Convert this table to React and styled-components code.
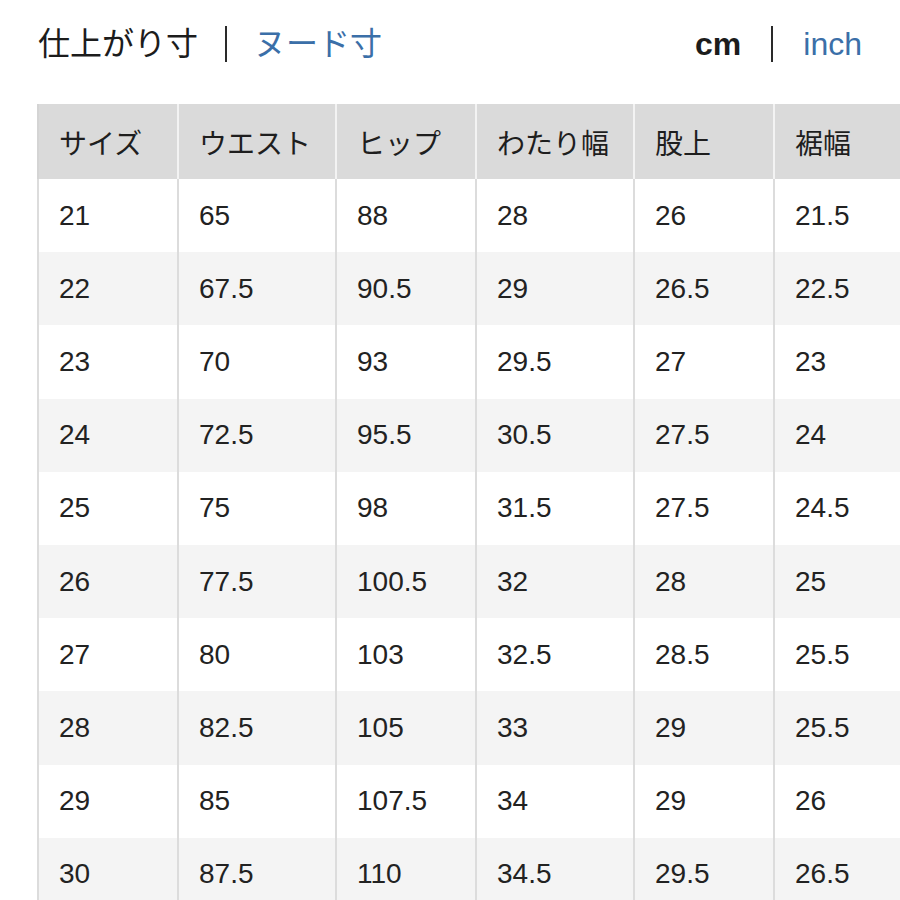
import React from "react";
import styled, { createGlobalStyle } from "styled-components";

const GlobalStyle = createGlobalStyle`
  html, body {
    margin: 0;
    padding: 0;
    background: #ffffff;
    overflow: hidden;
  }
  body {
    font-family: "Liberation Sans", "Noto Sans CJK JP", sans-serif;
    color: #1e1e1e;
  }
`;

const Page = styled.div`
  width: 900px;
  height: 900px;
  overflow: hidden;
  padding-top: 24px;
  box-sizing: border-box;
`;

const TopBar = styled.div`
  display: flex;
  justify-content: space-between;
  align-items: center;
  height: 40px;
  padding: 0 38px;
  margin-bottom: 40px;
`;

const Toggle = styled.div`
  display: flex;
  align-items: center;
  gap: ${(p) => p.gap || 30}px;
  font-size: ${(p) => p.size || 31}px;
`;

const Option = styled.span`
  color: ${(p) => (p.active ? "#1c1c1c" : "#3b6fa8")};
  font-weight: ${(p) => (p.bold ? 700 : 400)};
  font-family: "Liberation Sans", "Noto Sans CJK JP", sans-serif;
  line-height: 1;
`;

const Divider = styled.span`
  display: block;
  width: 2px;
  height: 36px;
  background: #2a2a2a;
`;

const Table = styled.table`
  margin-left: 37px;
  border-collapse: collapse;
  table-layout: fixed;
  width: 876px;
  font-size: 28px;
`;

const Col = styled.col`
  width: ${(p) => p.w}px;
`;

const HeadCell = styled.th`
  height: 75px;
  padding: 0 0 0 20px;
  text-align: left;
  font-weight: 400;
  background: #dadada;
  border-left: 2px solid ${(p) => (p.first ? "#d4d4d4" : "#f3f3f3")};
  color: #1e1e1e;
  white-space: nowrap;
  box-sizing: border-box;
`;

const Row = styled.tr`
  background: ${(p) => (p.shade ? "#f4f4f4" : "#ffffff")};
`;

const Cell = styled.td`
  height: 73.2px;
  padding: 0 0 0 20px;
  border-left: 2px solid #dcdcdc;
  color: #222222;
  white-space: nowrap;
  box-sizing: border-box;
`;

const widths = [140, 158, 140, 158, 140, 140];
const headers = ["サイズ", "ウエスト", "ヒップ", "わたり幅", "股上", "裾幅"];
const rows = [
  ["21", "65", "88", "28", "26", "21.5"],
  ["22", "67.5", "90.5", "29", "26.5", "22.5"],
  ["23", "70", "93", "29.5", "27", "23"],
  ["24", "72.5", "95.5", "30.5", "27.5", "24"],
  ["25", "75", "98", "31.5", "27.5", "24.5"],
  ["26", "77.5", "100.5", "32", "28", "25"],
  ["27", "80", "103", "32.5", "28.5", "25.5"],
  ["28", "82.5", "105", "33", "29", "25.5"],
  ["29", "85", "107.5", "34", "29", "26"],
  ["30", "87.5", "110", "34.5", "29.5", "26.5"],
];

export default function App() {
  return (
    <>
      <GlobalStyle />
      <Page>
        <TopBar>
          <Toggle size={32} gap={27}>
            <Option active>仕上がり寸</Option>
            <Divider />
            <Option>ヌード寸</Option>
          </Toggle>
          <Toggle size={32}>
            <Option active bold>
              cm
            </Option>
            <Divider />
            <Option>inch</Option>
          </Toggle>
        </TopBar>
        <Table>
          <colgroup>
            {widths.map((w, i) => (
              <Col key={i} w={w} />
            ))}
          </colgroup>
          <thead>
            <tr>
              {headers.map((h, i) => (
                <HeadCell key={h} first={i === 0}>
                  {h}
                </HeadCell>
              ))}
            </tr>
          </thead>
          <tbody>
            {rows.map((r, i) => (
              <Row key={r[0]} shade={i % 2 === 1}>
                {r.map((v, j) => (
                  <Cell key={j}>{v}</Cell>
                ))}
              </Row>
            ))}
          </tbody>
        </Table>
      </Page>
    </>
  );
}
